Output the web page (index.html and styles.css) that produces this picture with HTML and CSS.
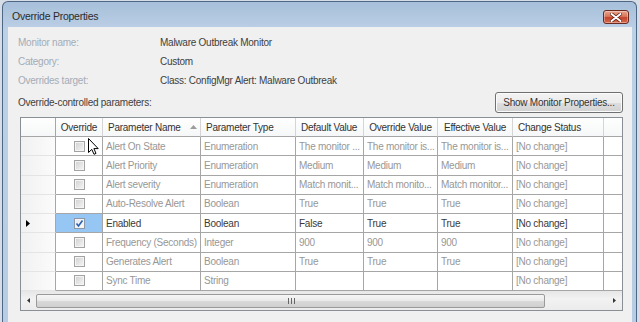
FILE: index.html
```html
<!DOCTYPE html>
<html lang="en">
<head>
  <meta charset="UTF-8" />
  <title>Override Properties</title>
  <link rel="stylesheet" href="styles.css">
</head>
<body>
  <div class="window">
    <div class="titlebar">
      <span class="title">Override Properties</span>
      <div class="close-btn">
        <svg width="12" height="9" viewBox="0 0 12 9"><path d="M1.5 1 L10.5 8 M10.5 1 L1.5 8" stroke="#5a1a10" stroke-width="3.4" stroke-linecap="round"/><path d="M1.5 1 L10.5 8 M10.5 1 L1.5 8" stroke="#fff" stroke-width="2" stroke-linecap="round"/></svg>
      </div>
    </div>

    <div class="panel">
      <div class="info">
        <div class="info-row"><span class="info-label">Monitor name:</span><span class="info-value">Malware Outbreak Monitor</span></div>
        <div class="info-row"><span class="info-label">Category:</span><span class="info-value">Custom</span></div>
        <div class="info-row"><span class="info-label">Overrides target:</span><span class="info-value">Class: ConfigMgr Alert: Malware Outbreak</span></div>
      </div>

      <div class="params-bar">
        <span>Override-controlled parameters:</span>
        <button class="btn">Show Monitor Properties...</button>
      </div>

      <div class="grid-wrap">
        <div class="row head">
          <div class="cell rh"></div>
          <div class="cell center">Override</div>
          <div class="cell">Parameter Name <svg class="sort" width="7" height="4" viewBox="0 0 7 4"><path d="M0 4 L3.5 0 L7 4 Z" fill="#9c9c9c"/></svg></div>
          <div class="cell">Parameter Type</div>
          <div class="cell">Default Value</div>
          <div class="cell center">Override Value</div>
          <div class="cell center">Effective Value</div>
          <div class="cell">Change Status</div>
          <div class="cell last"></div>
        </div>

        <div class="row">
          <div class="cell rh"></div>
          <div class="cell center"><span class="check"></span></div>
          <div class="cell">Alert On State</div>
          <div class="cell">Enumeration</div>
          <div class="cell">The monitor ...</div>
          <div class="cell">The monitor is...</div>
          <div class="cell">The monitor is...</div>
          <div class="cell">[No change]</div>
          <div class="cell last"></div>
        </div>
        <div class="row">
          <div class="cell rh"></div>
          <div class="cell center"><span class="check"></span></div>
          <div class="cell">Alert Priority</div>
          <div class="cell">Enumeration</div>
          <div class="cell">Medium</div>
          <div class="cell">Medium</div>
          <div class="cell">Medium</div>
          <div class="cell">[No change]</div>
          <div class="cell last"></div>
        </div>
        <div class="row">
          <div class="cell rh"></div>
          <div class="cell center"><span class="check"></span></div>
          <div class="cell">Alert severity</div>
          <div class="cell">Enumeration</div>
          <div class="cell">Match monit...</div>
          <div class="cell">Match monito...</div>
          <div class="cell">Match monitor...</div>
          <div class="cell">[No change]</div>
          <div class="cell last"></div>
        </div>
        <div class="row">
          <div class="cell rh"></div>
          <div class="cell center"><span class="check"></span></div>
          <div class="cell">Auto-Resolve Alert</div>
          <div class="cell">Boolean</div>
          <div class="cell">True</div>
          <div class="cell">True</div>
          <div class="cell">True</div>
          <div class="cell">[No change]</div>
          <div class="cell last"></div>
        </div>
        <div class="row active">
          <div class="cell rh"><svg width="4" height="7" viewBox="0 0 4 7"><path d="M0 0 L4 3.5 L0 7 Z" fill="#000"/></svg></div>
          <div class="cell center selected">
            <span class="check checked"><svg width="9" height="9" viewBox="0 0 9 9"><path d="M1.5 4.5 L3.5 7 L7.5 1.5" stroke="#2a5fb8" stroke-width="1.6" fill="none"/></svg></span>
          </div>
          <div class="cell">Enabled</div>
          <div class="cell">Boolean</div>
          <div class="cell">False</div>
          <div class="cell">True</div>
          <div class="cell">True</div>
          <div class="cell">[No change]</div>
          <div class="cell last"></div>
        </div>
        <div class="row">
          <div class="cell rh"></div>
          <div class="cell center"><span class="check"></span></div>
          <div class="cell">Frequency (Seconds)</div>
          <div class="cell">Integer</div>
          <div class="cell">900</div>
          <div class="cell">900</div>
          <div class="cell">900</div>
          <div class="cell">[No change]</div>
          <div class="cell last"></div>
        </div>
        <div class="row">
          <div class="cell rh"></div>
          <div class="cell center"><span class="check"></span></div>
          <div class="cell">Generates Alert</div>
          <div class="cell">Boolean</div>
          <div class="cell">True</div>
          <div class="cell">True</div>
          <div class="cell">True</div>
          <div class="cell">[No change]</div>
          <div class="cell last"></div>
        </div>
        <div class="row">
          <div class="cell rh"></div>
          <div class="cell center"><span class="check"></span></div>
          <div class="cell">Sync Time</div>
          <div class="cell">String</div>
          <div class="cell"></div>
          <div class="cell"></div>
          <div class="cell"></div>
          <div class="cell">[No change]</div>
          <div class="cell last"></div>
        </div>

        <div class="hscroll">
          <div class="sb-btn"><svg width="3" height="5" viewBox="0 0 3 5"><path d="M3 0 L0 2.5 L3 5 Z" fill="#333"/></svg></div>
          <div class="sb-thumb">
            <svg width="7" height="6" viewBox="0 0 7 6"><path d="M0.5 0 V6 M3.5 0 V6 M6.5 0 V6" stroke="#666" stroke-width="1"/></svg>
          </div>
          <div class="sb-track"></div>
          <div class="sb-btn"><svg width="3" height="5" viewBox="0 0 3 5"><path d="M0 0 L3 2.5 L0 5 Z" fill="#333"/></svg></div>
        </div>

        <svg class="cursor" width="11" height="17" viewBox="0 0 11 17"><path d="M0.5 0.5 V14.5 L3.8 11.4 L6 16.3 L8 15.4 L5.9 10.6 H10.2 Z" fill="#fff" stroke="#000" stroke-width="1" stroke-linejoin="round"/></svg>
      </div>
    </div>
  </div>
</body>
</html>
```

FILE: styles.css
```css
* {
  margin: 0;
  padding: 0;
  box-sizing: border-box;
}

html, body {
  width: 100%;
  height: 100%;
  overflow: hidden;
}

body {
  background: #d6dde6;
  font-family: "Liberation Sans", Arial, sans-serif;
  font-size: 10px;
  letter-spacing: -0.25px;
  color: #3a3a3a;
}

.window {
  width: 635px;
  height: 321px;
  margin: 1px 0 0 2px;
  border: 1px solid #4d6785;
  border-bottom: none;
  border-radius: 6px 6px 0 0;
  padding: 0 4px 0 5px;
  background: linear-gradient(#a7bfda, #bcd0e6 28px, #b8cce3);
  display: flex;
  flex-direction: column;
}

.titlebar {
  height: 25px;
  display: flex;
  align-items: flex-start;
}

.title {
  font-size: 10.5px;
  color: #2c2c2c;
  padding: 8px 0 0 4px;
}

.close-btn {
  margin: 8px 3px 0 auto;
  width: 26px;
  height: 14px;
  border: 1px solid #6b2a1f;
  border-radius: 3px;
  background: linear-gradient(#e9a48d, #d8775b 45%, #c4442a 55%, #d66a4e);
  display: flex;
  align-items: center;
  justify-content: center;
  box-shadow: inset 0 0 0 1px rgba(255, 255, 255, 0.35);
}

.panel {
  flex: 1;
  background: #f0f0f0;
  padding: 6px 9px 0 10px;
}

.info-row {
  height: 19px;
  display: flex;
  align-items: center;
}

.info-label {
  width: 142px;
  color: #a3acb8;
}

.info-value {
  color: #404040;
}

.params-bar {
  height: 21px;
  margin-top: 2px;
  display: flex;
  align-items: center;
  justify-content: space-between;
  color: #404040;
}

.btn {
  width: 128px;
  height: 21px;
  border: 1px solid #707070;
  border-radius: 3px;
  background: linear-gradient(#f3f3f3, #ececec 50%, #dedede 51%, #d2d2d2);
  font-family: inherit;
  font-size: 10px;
  letter-spacing: -0.25px;
  color: #333;
  box-shadow: inset 0 0 0 1px #fbfbfb;
}

.grid-wrap {
  position: relative;
  margin: 4px 0 0 2px;
  border: 1px solid #8a8f96;
  background: #fff;
}

.row {
  display: grid;
  grid-template-columns: 35px 47px 98px 95px 68px 74px 75px 91px 1fr;
  height: 19.25px;
  color: #979797;
}

.row.head {
  height: 19px;
  color: #333;
  background: linear-gradient(#fff, #f5f6f7);
}

.row.active {
  color: #3a3a3a;
}

.cell {
  display: flex;
  align-items: center;
  padding-left: 3px;
  white-space: nowrap;
  overflow: hidden;
  border-right: 1px solid #a6a6a6;
  border-bottom: 1px solid #a6a6a6;
}

.head .cell {
  padding-left: 5px;
  border-right-color: #d5d5d5;
}

.cell.center {
  justify-content: center;
  padding-left: 0;
}

.cell.last {
  border-right: none;
}

.cell.rh {
  padding-left: 5px;
  background: linear-gradient(90deg, #f1f1f1, #fbfbfb);
  border-bottom-color: #e4e4e4;
  border-right-color: #a6a6a6;
}

.head .cell.rh {
  background: transparent;
  border-bottom-color: #a6a6a6;
}

.sort {
  margin: 0 3px 1px auto;
}

.cell.selected {
  background: #96c6f4;
}

.check {
  width: 11px;
  height: 11px;
  border: 1px solid #a3a3a3;
  background: linear-gradient(135deg, #d0d0d0, #f6f6f6);
  box-shadow: inset 0 0 0 1px #f4f4f4;
  display: flex;
  align-items: center;
  justify-content: center;
}

.check.checked {
  border-color: #8c98a8;
  background: linear-gradient(135deg, #e3e8ee, #fbfcfd);
}

.hscroll {
  height: 19px;
  display: flex;
  align-items: center;
  background: linear-gradient(#e6e6e6, #f2f2f2 40%, #ececec);
}

.sb-btn {
  width: 15px;
  height: 100%;
  display: flex;
  align-items: center;
  justify-content: center;
}

.sb-thumb {
  width: 509px;
  height: 14px;
  border: 1px solid #9a9a9a;
  border-radius: 2px;
  background: linear-gradient(#f6f6f6, #e9e9e9 50%, #d9d9d9 51%, #cfcfcf);
  display: flex;
  align-items: center;
  justify-content: center;
  padding-left: 2px;
}

.sb-track {
  flex: 1;
}

.cursor {
  position: absolute;
  left: 67px;
  top: 20px;
}
```
